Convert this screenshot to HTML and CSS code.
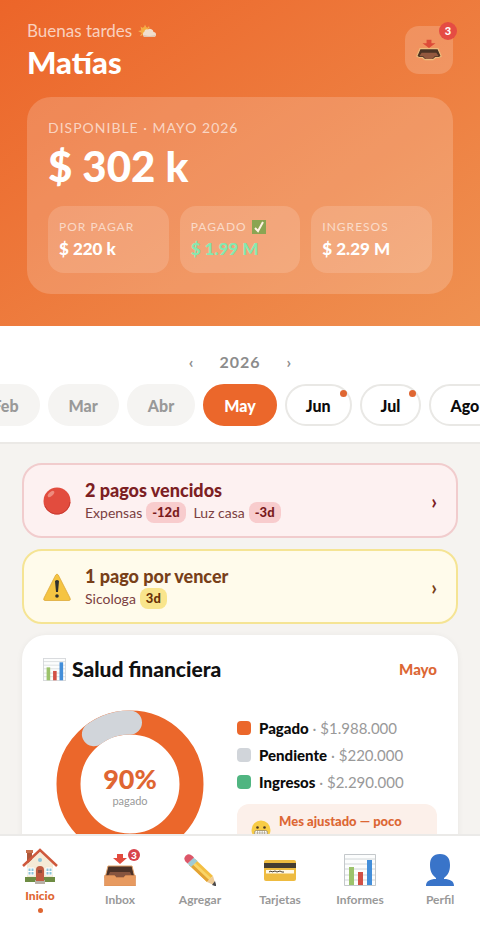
FILE: index.html
```html
<!DOCTYPE html>
<html lang="es">
<head>
<meta charset="utf-8">
<meta name="viewport" content="width=device-width, initial-scale=1">
<title>Inicio</title>
<link rel="stylesheet" href="styles.css">
</head>
<body>
<svg class="sprite" aria-hidden="true">
  <symbol id="tray-dark" viewBox="0 0 32 32" preserveAspectRatio="none">
    <path fill="#dd4b38" d="M13 1h6v5h5l-8 7-8-7h5z"/>
    <path fill="#4b3324" stroke="#efbc7c" stroke-width="1.5" d="M5 14h22l4 11-3 2h-4l-3 3H11l-3-3H4l-3-2z"/>
    <path fill="#93593f" d="M7 20h18l3 5h-5l-3 4h-8l-3-4H4z"/>
  </symbol>
  <symbol id="tray" viewBox="0 0 32 32">
    <path fill="#e24b3e" d="M13 0h6v4h4l-7 6-7-6h4z"/>
    <path fill="#4b3127" stroke="#e5a46b" d="M4 12h24l3 12H1z"/>
    <path fill="#86543f" d="M6 18h20l3 6H3z"/>
    <path fill="#e79a60" stroke="#d98c53" stroke-width=".6" d="M.5 21.500h10l2 2h7l2-2h10V32H.5z"/>
  </symbol>
  <symbol id="chart" viewBox="0 0 32 32">
    <path fill="#fcfdfd" stroke="#b5babe" stroke-width=".8" d="M.5.5h31v31H.5z"/>
    <path stroke="#c6cbce" stroke-width=".8" d="M1 5h30M1 10h30M1 15h30M1 21h30M1 26h30"/>
    <path fill="#9cc36b" d="M5 13h5v18H5z"/>
    <path fill="#d25045" d="M14 18h5v13h-5z"/>
    <path fill="#438ed9" d="M23 6h5v25h-5z"/>
  </symbol>
</svg>

<div class="app">
  <main class="content">
    <header class="hero">
      <div class="hero-top">
        <div>
          <p class="greeting">Buenas tardes
            <svg class="weather" viewBox="0 0 36 28" aria-hidden="true">
              <path fill="#f5b653" d="m14 1 2 5-4 1zM5 5l5 4-3 3zM0 14l6-1v4zm4 10 3-5 3 3zM22 4l1 5-4-1z"/>
              <circle cx="14" cy="14" r="8" fill="#f6ae42"/>
              <path fill="#f0dfce" d="M14 26a6 6 0 0 1-1-11 5 5 0 0 1 7-4 7 7 0 0 1 11 5 5 5 0 0 1 0 10z"/>
              <path fill="#dfc8b5" d="M13 26h18a5 5 0 0 0 4-5c-7 4-15 3-22 1-2 0-3 4 0 4z"/>
            </svg>
          </p>
          <h1 class="name">Matías</h1>
        </div>
        <button class="inbox-btn" type="button" aria-label="Inbox, 3 nuevos">
          <svg class="inbox-icon" aria-hidden="true"><use href="#tray-dark"/></svg>
          <span class="badge">3</span>
        </button>
      </div>
      <section class="balance">
        <p class="balance-label">DISPONIBLE · MAYO 2026</p>
        <p class="balance-value">$ 302 k</p>
        <div class="stats">
          <div class="stat"><p class="stat-label">POR PAGAR</p><p class="stat-value">$ 220 k</p></div>
          <div class="stat"><p class="stat-label">PAGADO
            <svg class="check" viewBox="0 0 14 14" aria-hidden="true"><path fill="#8aa552" d="M0 0h14v14H0z"/><path fill="none" stroke="#fff3e4" stroke-width="2" d="m3 8 3 3 5-9"/></svg></p>
            <p class="stat-value stat-value--paid">$ 1.99 M</p></div>
          <div class="stat"><p class="stat-label">INGRESOS</p><p class="stat-value">$ 2.29 M</p></div>
        </div>
      </section>
    </header>

    <section class="period">
      <div class="year">
        <button class="year-btn" type="button" aria-label="Año anterior">‹</button>
        <span class="year-value">2026</span>
        <button class="year-btn" type="button" aria-label="Año siguiente">›</button>
      </div>
      <div class="months">
        <div class="months-side months-side--past">
          <button class="month month--past" type="button">Feb</button>
          <button class="month month--past" type="button">Mar</button>
          <button class="month month--past" type="button">Abr</button>
        </div>
        <button class="month month--active" type="button">May</button>
        <div class="months-side">
          <button class="month" type="button">Jun<i class="month-dot"></i></button>
          <button class="month" type="button">Jul<i class="month-dot"></i></button>
          <button class="month" type="button">Ago</button>
        </div>
      </div>
    </section>

    <div class="cards">
      <a class="alert alert--late" href="#vencidos">
        <svg class="alert-icon" viewBox="0 0 28 28" aria-hidden="true"><circle cx="14" cy="14" r="13.500" fill="#e24c3e"/><path fill="none" stroke="#c83b32" d="M27 15a13 13 0 0 1-25 4"/><ellipse cx="8" cy="7" rx="4" ry="2" fill="#ee8b7d" transform="rotate(-42 8 7)"/></svg>
        <span class="alert-body">
          <strong class="alert-title">2 pagos vencidos</strong>
          <span class="alert-items">
            <span class="alert-item">Expensas <b class="days">-12d</b></span>
            <span class="alert-item">Luz casa <b class="days">-3d</b></span>
          </span>
        </span>
        <span class="chevron">›</span>
      </a>
      <a class="alert alert--soon" href="#por-vencer">
        <svg class="alert-icon" viewBox="0 0 28 28" aria-hidden="true"><path fill="#f5c442" stroke="#dda93b" stroke-width=".8" stroke-linejoin="round" d="M12.700 2q1.300-2 2.600 0L27 25q1 2.500-1 2.500H2Q0 27.500 1 25z"/><path fill="#30302e" d="M12 8q2-2 4 0l-1 11h-2z"/><circle cx="14" cy="23" r="1.800" fill="#30302e"/></svg>
        <span class="alert-body">
          <strong class="alert-title">1 pago por vencer</strong>
          <span class="alert-items"><span class="alert-item">Sicologa <b class="days">3d</b></span></span>
        </span>
        <span class="chevron">›</span>
      </a>

      <section class="health">
        <div class="health-head">
          <h2 class="health-title"><svg class="health-icon" aria-hidden="true"><use href="#chart"/></svg>Salud financiera</h2>
          <span class="health-month">Mayo</span>
        </div>
        <div class="health-body">
          <div class="donut">
            <svg class="donut-ring" viewBox="0 0 148 148" aria-hidden="true">
              <circle cx="74" cy="74" r="61.500" fill="none" stroke="#eb672b" stroke-width="24"/>
              <path d="M37.900 24.200A61.500 61.500 0 0 1 74 12.500" fill="none" stroke="#d1d5da" stroke-width="24" stroke-linecap="round"/>
            </svg>
            <div class="donut-text"><strong class="donut-value">90%</strong><span class="donut-label">pagado</span></div>
          </div>
          <div class="summary">
            <ul class="legend">
              <li class="legend-row"><i class="swatch swatch--paid"></i><span><b class="legend-name">Pagado</b> · $1.988.000</span></li>
              <li class="legend-row"><i class="swatch swatch--pending"></i><span><b class="legend-name">Pendiente</b> · $220.000</span></li>
              <li class="legend-row"><i class="swatch swatch--income"></i><span><b class="legend-name">Ingresos</b> · $2.290.000</span></li>
            </ul>
            <div class="tip">
              <svg class="tip-icon" viewBox="0 0 20 20" aria-hidden="true"><circle cx="10" cy="10" r="9.500" fill="#f8cc45"/><circle cx="6.500" cy="7.500" r="1.300" fill="#4c3725"/><circle cx="13.500" cy="7.500" r="1.300" fill="#4c3725"/><rect x="3.500" y="10.500" width="13" height="5" rx="2" fill="#fff" stroke="#8a7a58" stroke-width=".7"/><path stroke="#8a7a58" stroke-width=".5" d="M6.500 11v4m2.300-4v4m2.400-4v4m2.300-4v4M4 13h12"/></svg>
              <p class="tip-text">Mes ajustado — poco margen disponible</p>
            </div>
          </div>
        </div>
      </section>
    </div>
  </main>

  <nav class="tabs">
    <a class="tab tab--active" href="#inicio">
      <svg class="tab-icon" viewBox="0 0 36 36" aria-hidden="true">
        <path fill="#ad5639" d="M5 3h5v12H5z"/><path fill="#c9714d" d="M4 2h7v3H4z"/>
        <path fill="#f5ead6" d="M5 16 18 4l13 12v17H5z"/>
        <path fill="none" stroke="#cf593c" stroke-width="2.500" d="M1 18 18 2l17 16"/>
        <path fill="#6e8c43" d="M3 29h30v5H3z"/><path fill="#b8b0a6" d="M13 32h10v4H13z"/>
        <path fill="#c15b40" d="M14 33V22q0-4 4-4t4 4v11z"/><path fill="#8b4b3a" d="M16 22h4v3h-4z"/>
        <path fill="#8cc4d8" stroke="#fff" d="M6 20h6v7H6zm18 0h6v7h-6z"/><path stroke="#fff" d="M9 20v7m18-7v7M6 23.500h6m12 0h6"/>
        <circle cx="18" cy="12" r="2" fill="#8cc4d8"/>
      </svg>
      <span>Inicio</span><i class="tab-dot"></i>
    </a>
    <a class="tab" href="#inbox">
      <span class="tab-badge-wrap"><svg class="tab-icon" aria-hidden="true"><use href="#tray"/></svg><span class="badge badge--small">3</span></span>
      <span>Inbox</span>
    </a>
    <a class="tab" href="#agregar">
      <svg class="tab-icon" viewBox="0 0 32 32" aria-hidden="true">
        <path fill="#f3bf43" d="m5 11 6-6 18 17-6 6z"/><path fill="#f9d568" d="m7 9 2-2 18 17-2 2z"/><path fill="#e3a334" d="m5 11 2-2 18 17-2 2z"/>
        <path fill="#eecb98" d="m23 28 6-6 3 10z"/><path fill="#49484a" d="m28 31 3-4 1.500 5.500z"/>
        <path fill="#9fcbd5" d="m3.500 9.500 6-6 4 3.500-6.500 6z"/>
        <path fill="#dc5668" d="M1.500 7.500Q-1 4 2 1.500T8.500 2L10 3.500l-6.500 6z"/>
      </svg>
      <span>Agregar</span>
    </a>
    <a class="tab" href="#tarjetas">
      <svg class="tab-icon" viewBox="0 0 32 32" aria-hidden="true">
        <rect y="6" width="32" height="21" rx="2" fill="#eebb40"/><path fill="#453c31" d="M0 9h32v5H0z"/><path fill="#fff9e9" d="M2 16h28v3.500H2z"/>
        <path fill="none" stroke="#4b4134" d="m5 18 2-1 1 1 3-1 2 1 3-1 2 1h2"/>
      </svg>
      <span>Tarjetas</span>
    </a>
    <a class="tab" href="#informes">
      <svg class="tab-icon" aria-hidden="true"><use href="#chart"/></svg>
      <span>Informes</span>
    </a>
    <a class="tab" href="#perfil">
      <svg class="tab-icon" viewBox="0 0 32 32" aria-hidden="true">
        <path fill="#3974c9" d="M16 0c7 0 10 4 10 11 0 6-2 10-6 13v1c6 0 10 2 10 7H2c0-5 4-7 10-7v-1C8 21 6 17 6 11 6 4 9 0 16 0z"/>
      </svg>
      <span>Perfil</span>
    </a>
  </nav>
</div>
</body>
</html>
```
FILE: styles.css
```css
* { box-sizing: border-box; }
body { margin: 0; background: #f5f3f0; color: #111; font-family: Lato, "Liberation Sans", sans-serif; font-size: 16px; }
p, h1, h2, ul { margin: 0; padding: 0; }
button { font: inherit; color: inherit; border: 0; padding: 0; background: none; cursor: pointer; }
a { color: inherit; text-decoration: none; }
svg { display: block; }
.sprite { position: absolute; width: 0; height: 0; }

.app { height: 100vh; display: flex; flex-direction: column; }
.content { flex: 1; min-height: 0; overflow-y: auto; scrollbar-width: none; }

.hero { padding: 20px 27px 32px; color: #fff; background: linear-gradient(145deg, #ec6529, #ef9151); }
.hero-top { display: flex; justify-content: space-between; align-items: flex-end; margin-bottom: 23px; }
.greeting { display: flex; align-items: center; gap: 6px; font-size: 17px; line-height: 22px; color: rgba(255, 255, 255, .7); }
.weather { width: 18px; height: 14px; }
.name { font-size: 31px; line-height: 40px; font-weight: 900; margin-bottom: -8px; }
.inbox-btn { position: relative; width: 48px; height: 48px; border-radius: 14px; background: rgba(255, 255, 255, .18); display: grid; place-items: center; }
.inbox-icon { width: 26px; height: 22px; }
.badge { position: absolute; top: -4px; right: -4px; width: 18px; height: 18px; border-radius: 50%; background: #e54c43; color: #fff; font-size: 11px; line-height: 18px; font-weight: 900; text-align: center; }
.badge--small { top: -5px; right: -4px; width: 12px; height: 12px; font-size: 10px; line-height: 12px; background: #d8434c; }

.balance { padding: 21px; border-radius: 24px; background: rgba(255, 255, 255, .18); }
.balance-label { font-size: 14px; line-height: 20px; letter-spacing: 1px; color: rgba(255, 255, 255, .65); }
.balance-value { font-size: 42px; line-height: 56px; font-weight: 900; margin-bottom: 12px; }
.stats { display: grid; grid-template-columns: repeat(3, 1fr); gap: 11px; }
.stat { padding: 11px 11px 12px; border-radius: 16px; background: rgba(255, 255, 255, .15); white-space: nowrap; }
.stat-label { display: flex; align-items: center; gap: 5px; font-size: 12px; line-height: 20px; letter-spacing: 1px; color: rgba(255, 255, 255, .6); }
.check { width: 14px; height: 14px; }
.stat-value { font-size: 17px; line-height: 24px; font-weight: 900; }
.stat-value--paid { color: #86e8b0; }

.period { padding: 24px 0 16px; background: #fff; border-bottom: 2px solid #ebe9e6; }
.year { display: flex; justify-content: center; align-items: center; gap: 26px; margin-bottom: 10px; color: #8c8c8c; font-size: 16px; line-height: 24px; font-weight: 700; }
.year-value { letter-spacing: 1px; }
.months { display: grid; grid-template-columns: minmax(0, 1fr) auto minmax(0, 1fr); gap: 8px; }
.months-side { display: flex; gap: 8px; overflow: hidden; }
.months-side--past { justify-content: flex-end; }
.month { position: relative; flex: none; height: 42px; padding: 0 19px; border: 2px solid #e9e8e5; border-radius: 21px; background: #fff; color: #0b0b0b; font-size: 16px; font-weight: 900; }
.month--past { background: #f5f4f2; border-color: #f5f4f2; color: #999; }
.month--active { background: #eb672b; border-color: #eb672b; color: #fff; }
.month-dot { position: absolute; top: 4px; right: 3px; width: 7px; height: 7px; border-radius: 50%; background: #df6632; }

.cards { padding: 19px 22px; display: grid; gap: 11px; }
.alert { display: flex; align-items: center; gap: 14px; padding: 13px 19px; border: 2px solid; border-radius: 20px; }
.alert--late { background: #fdf1f1; border-color: #f1cccd; color: #7c2023; }
.alert--soon { background: #fffbeb; border-color: #f5e494; color: #784019; }
.alert-icon { width: 28px; height: 28px; }
.alert-body { flex: 1; }
.alert-title { display: block; font-size: 18px; line-height: 24px; font-weight: 900; }
.alert-items { display: flex; gap: 8px; color: #7b4041; font-size: 14px; line-height: 21px; }
.alert-item { display: flex; gap: 4px; }
.days { padding: 0 6px; border-radius: 8px; font-size: 13px; font-weight: 900; background: #f8cccd; color: #78191c; }
.alert--soon .days { background: #f9e58c; color: #693207; }
.chevron { font-size: 20px; line-height: 24px; font-weight: 700; }

.health { padding: 20px 21px; border-radius: 24px; background: #fff; box-shadow: 0 1px 6px rgba(0, 0, 0, .06); }
.health-head { display: flex; justify-content: space-between; align-items: center; margin-bottom: 27px; }
.health-title { display: flex; align-items: center; gap: 6px; font-size: 21px; line-height: 28px; font-weight: 900; }
.health-icon { width: 23px; height: 23px; }
.health-month { color: #dc6734; font-size: 15px; line-height: 20px; font-weight: 900; }
.health-body { display: flex; gap: 33px; padding-left: 13px; align-items: flex-start; }
.donut { flex: none; display: grid; place-items: center; }
.donut-ring, .donut-text { grid-area: 1 / 1; }
.donut-ring { width: 148px; height: 148px; }
.donut-text { display: grid; justify-items: center; padding-top: 6px; }
.donut-value { font-size: 27px; line-height: 28px; font-weight: 900; color: #df6632; }
.donut-label { font-size: 11px; line-height: 16px; color: #999; }
.summary { flex: 1; min-width: 0; display: grid; gap: 12px; padding-top: 8px; }
.legend { list-style: none; display: grid; gap: 7px; }
.legend-row { display: flex; align-items: center; gap: 8px; font-size: 15px; line-height: 20px; color: #999; white-space: nowrap; }
.legend-name { color: #0b0b0b; font-weight: 900; }
.swatch { width: 14px; height: 14px; border-radius: 4px; }
.swatch--paid { background: #eb672b; }
.swatch--pending { background: #d1d5da; }
.swatch--income { background: #50b581; }
.tip { display: flex; align-items: center; gap: 8px; padding: 8px 14px; border-radius: 12px; background: #fcf0ea; }
.tip-icon { flex: none; width: 20px; height: 20px; }
.tip-text { font-size: 13px; line-height: 18px; font-weight: 900; color: #dc6734; }

.tabs { display: grid; grid-template-columns: repeat(6, 1fr); padding: 12px 0 18px; border-top: 2px solid #ebeae8; background: #fff; }
.tab { display: flex; flex-direction: column; align-items: center; padding-top: 6px; gap: 5px; min-height: 76px; color: #999; font-size: 12px; line-height: 18px; font-weight: 700; }
.tab-icon { width: 32px; height: 32px; }
.tab-badge-wrap { position: relative; }
.tab--active { padding-top: 0; gap: 3px; color: #df6632; font-weight: 900; }
.tab--active .tab-icon { width: 36px; height: 36px; }
.tab-dot { width: 5px; height: 5px; border-radius: 50%; background: #df6632; }
```
